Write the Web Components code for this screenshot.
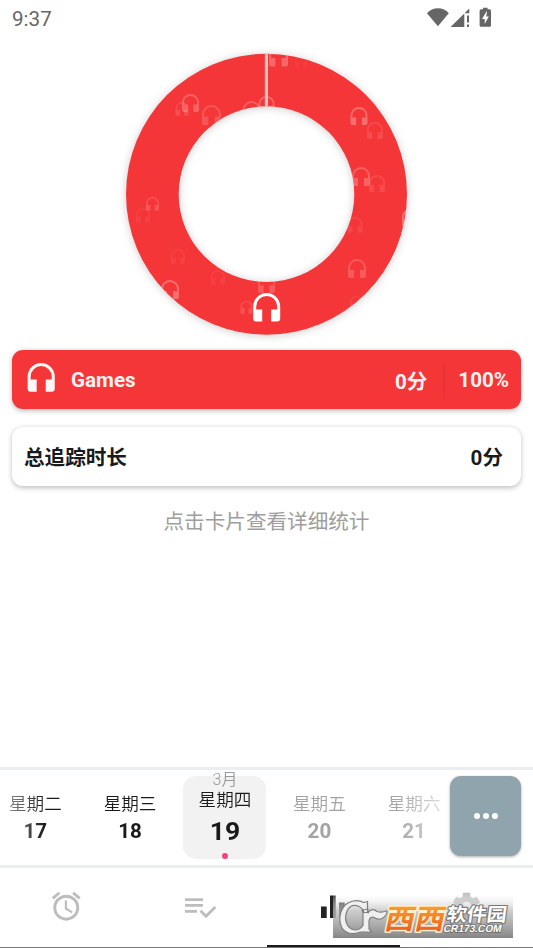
<!DOCTYPE html>
<html lang="zh-CN">
<head>
<meta charset="utf-8">
<title>统计</title>
<style>
html,body{margin:0;height:100%;overflow:hidden;background:#fff}
body{font-family:Roboto,"Noto Sans CJK SC",sans-serif}
</style>
</head>
<body>
<stats-screen></stats-screen>
<script>
const define=(name,html,setup)=>customElements.define(name,class extends HTMLElement{
  constructor(){
    super();
    this.attachShadow({mode:'open'});
    if(!setup)this.shadowRoot.innerHTML=html;
  }
  connectedCallback(){ if(setup)this.shadowRoot.innerHTML=setup(this); }
});
const HEADSET='M12 1a9 9 0 0 0-9 9v8a2 2 0 0 0 2 2h4v-8H5v-2a7 7 0 0 1 14 0v2h-4v8h4a2 2 0 0 0 2-2v-8a9 9 0 0 0-9-9z';

define('status-bar',`<style>
:host{display:flex;align-items:center;height:36px;padding:0 40px 0 12px;box-sizing:border-box;color:#666;font-size:20.600px}
span{flex:1;line-height:36px;padding-top:1px}
svg{display:block}
</style>
<span>9:37</span>
<svg width="66" height="24" viewBox="0 0 66 24" fill="#666">
<path d="M0 7.300C5.500 .7 16.500 .7 21.800 7.300L10.900 20.300z"/>
<path d="M23.500 21L37.300 7.400V21zM38 6.800L42.300 2.600v4.600h-4.300z"/>
<path d="M40 9.500h2v7h-2zM40 18.500h2V21h-2z"/>
<path d="M56 1.700h4.600v1.600h1.900a1.500 1.500 0 0 1 1.500 1.500v14.400a1.500 1.500 0 0 1-1.500 1.500h-8.400a1.500 1.500 0 0 1-1.500-1.500V4.800a1.500 1.500 0 0 1 1.500-1.500H56z"/>
<path d="M59.500 5.500L55 13h2.700v5l4.100-7.400h-2.500l.7-5z" fill="#fff"/>
</svg>`);

define('ring-chart','',()=>{
  const marks=[[182,102,13,.13],[190.500,94,17,.22],[211.500,105,19,.16],[251.500,101,18,.2],[266.500,96,16,.25],[278.500,46.500,19,.25],[359,107,17,.28],[375,122,16,.1],[361,167,18,.22],[377,175,16,.1],[152.500,197,13,.16],[143,208,14,.06],[178,249,14,.06],[170,280,18,.28],[218,270,14,.06],[246.500,301,12,.14],[266.500,275,17,.18],[357,259,18,.18],[355,217,15,.08],[356,296,12,.08],[411,208,18,.3],[301,55,12,.04]];
  return `<style>
:host{display:block;width:320px;height:310px;margin:0 auto}
svg{display:block;overflow:visible;filter:drop-shadow(0 1px 4px #0003)}
</style>
<svg width="320" height="310" viewBox="107 36 320 310">
<defs><clipPath id="ring"><path clip-rule="evenodd" d="M126 194.200a140.500 140.500 0 1 0 281 0a140.500 140.500 0 1 0-281 0zM178.700 194.200a87.800 87.800 0 1 1 175.600 0a87.800 87.800 0 1 1-175.600 0z"/></clipPath></defs>
<g clip-path="url(#ring)">
<rect x="120" y="50" width="300" height="300" fill="#f53638"/>
${marks.map(([x,y,w,o])=>`<path fill="#fff" opacity="${o}" transform="translate(${x},${y}) scale(${w/18}) translate(-12,-1)" d="${HEADSET}"/>`).join('')}
<path d="M265 50h3v60h-3z" fill="#dfc4c4"/><path d="M264.600 54h.8v52h-.8z" fill="#b88"/>
</g>
<path fill="#fff" transform="translate(266.700,293) scale(1.500) translate(-12,-1)" d="${HEADSET}"/>
</svg>`;});

define('stat-card','',el=>`<style>
:host{display:flex;align-items:center;height:59px;margin:0 12px;border-radius:11px;background:#fff;color:#1a1a1a;box-shadow:0 1.500px 5px #00000040;box-sizing:border-box;font-size:20.600px;font-weight:700;padding:0 18px 1px 12px}
:host([filled]){background:#f53638;color:#fff1f1;padding:1px 12px 0 14px}
::slotted([slot=name]){flex:1}
::slotted([slot=time]){position:relative;top:-.5px}
svg{margin:-5px 14px 0 0}
i{width:2px;height:35px;background:#e83337;margin:0 13px 0 16px}
</style>${el.hasAttribute('filled')?`<svg width="31" height="31" viewBox="1.900 .3 20.600 20.600" fill="#fff6f6"><path d="${HEADSET}"/></svg>`:''}
<slot name="name"></slot><slot name="time"></slot>${el.hasAttribute('filled')?'<i></i>':''}<slot name="share"></slot>`);

define('day-cell','',el=>`<style>
:host{display:flex;flex-direction:column;align-items:center;width:94.700px;flex:none;color:#1a1a1a;box-sizing:border-box;padding-top:23px}
:host([faded]){color:#a3a3a3}
.w{font-size:17.600px;line-height:22px;font-weight:350}
.d{font-size:20.600px;line-height:24px;font-weight:700;margin-top:4px}
:host([active]){padding:0 5.500px 0 6px}
.box{display:flex;flex-direction:column;align-items:center;width:83px;height:83px;margin-top:6px;background:#f2f2f2;border-radius:13px}
.m{font-size:16px;line-height:18px;margin-top:-5px;color:#999;font-weight:350}
.box .w{margin-top:0}.box .d{font-size:26.500px;line-height:30px;margin-top:5px}
.dot{width:6px;height:6px;border-radius:50%;background:#f4427c;margin-top:7px}
</style>${el.hasAttribute('active')?`<div class="box"><div class="m">${el.getAttribute('month')}</div><div class="w">${el.getAttribute('week')}</div><div class="d">${el.getAttribute('day')}</div><div class="dot"></div></div>`:`<div class="w">${el.getAttribute('week')}</div><div class="d">${el.getAttribute('day')}</div>`}`);

define('day-strip',`<style>
:host{display:flex;height:101px;box-sizing:border-box;border-top:3px solid #eaeef0;border-bottom:3px solid #eaeef0;padding-right:12px;justify-content:space-between}
.days{display:flex;width:441px;overflow:hidden;-webkit-mask-image:linear-gradient(90deg,#0006,#000 45px,#000 395px,#0006);mask-image:linear-gradient(90deg,#0006,#000 45px,#000 395px,#0006)}
.in{display:flex;margin-left:-12px}
button{all:unset;display:flex;align-items:center;justify-content:center;gap:3px;width:71px;height:80px;margin-top:6px;border-radius:11px;background:#90a4ad;box-shadow:0 1px 3px #0005}
b{width:6px;height:6px;border-radius:50%;background:#fff}
</style><div class="days"><div class="in">
<day-cell week="星期二" day="17"></day-cell><day-cell week="星期三" day="18"></day-cell><day-cell active month="3月" week="星期四" day="19"></day-cell><day-cell faded week="星期五" day="20"></day-cell><day-cell faded week="星期六" day="21"></day-cell></div></div>
<button><b></b><b></b><b></b></button>`);

const C_SHAPE='M31 9.500L34.500 8.500V19.500H31C28.500 12 19 9.500 14.500 17C10.500 25 13 36 22 37C26 37 28 35.500 30 32.500V20L29 17L35 16V20C37 16 41 15.500 44 18.500C48 20 51 19 54.500 17.500C53 25 47 28 42 25C38.500 23 36.500 24.500 36 28V36L39 39H27C20 42 12 41 8.500 34C4.500 25 8 14 15 10C20 7 26 7 31 9.500Z';
define('site-mark',`<style>
:host{display:block;position:absolute;left:333px;top:893px;width:180px;height:45px}
svg{display:block;overflow:visible}
</style>
<svg width="180" height="45" viewBox="0 0 180 45">
<defs><linearGradient id="bg" x2="0" y2="1"><stop stop-color="#fff" stop-opacity="0"/><stop offset=".12" stop-color="#eee" stop-opacity=".35"/><stop offset=".4" stop-color="#bbb" stop-opacity=".75"/><stop offset="1" stop-color="#858585"/></linearGradient>
<linearGradient id="or" x2="0" y2="1"><stop offset=".2" stop-color="#fba528"/><stop offset="1" stop-color="#ea4f20"/></linearGradient></defs>
<rect width="180" height="45" fill="url(#bg)"/>
<path d="${C_SHAPE}" fill="#efefef" stroke="#808080" stroke-width="1.200" stroke-linejoin="round"/>
<g font-family="Noto Sans CJK SC,sans-serif" font-weight="700" paint-order="stroke" stroke-linejoin="round">
<text transform="translate(50.500,35.500) skewX(-12)" font-size="28" textLength="60" lengthAdjust="spacingAndGlyphs" fill="url(#or)" stroke="#fff0d0" stroke-width="3">西西</text>
<text transform="translate(113,28) skewX(-8)" font-size="18.500" textLength="60" lengthAdjust="spacingAndGlyphs" fill="#fff" stroke="#777" stroke-width="2.200">软件园</text>
<text transform="translate(110,38.500) skewX(-12)" font-family="Liberation Sans,sans-serif" font-size="10.500" textLength="58" lengthAdjust="spacingAndGlyphs" fill="#fff" stroke="#707070" stroke-width="1.800">CR173.COM</text>
</g></svg>`);

define('nav-bar',`<style>
:host{display:grid;grid-template-columns:repeat(4,1fr);height:80px;box-sizing:border-box;border-bottom:1px solid #777;position:relative}
div{display:flex;align-items:center;justify-content:center;position:relative}
svg{display:block}
.up{margin-bottom:3px}
.on::after{content:"";position:absolute;left:0;right:0;bottom:0;height:2px;background:#1a1a1a}
</style>
<div><svg class="up" width="34.500" height="34.500" viewBox="0 0 24 24" fill="#bdbdbd"><path d="M22 5.720l-4.600-3.860-1.290 1.530 4.600 3.860L22 5.720zM7.880 3.390L6.600 1.860 2 5.710l1.290 1.530 4.590-3.850zM12.500 8H11v6l4.750 2.850.75-1.230-4-2.370V8zM12 4a9 9 0 1 0 0 18 9 9 0 0 0 0-18zm0 16a7 7 0 1 1 0-14 7 7 0 0 1 0 14z"/></svg></div>
<div><svg width="32" height="24" viewBox="0 0 32 24" fill="none" stroke="#bdbdbd" stroke-width="2.800"><path d="M1 3.600H19M1 9.400H19M1 15.300H13M16.500 14.700L22 20.200L31.300 10.900"/></svg></div>
<div class="on"><svg width="28" height="32" viewBox="0 0 28 32" fill="#222"><path d="M2 14.500h5.700V26H2zM11 3.500h5.700V26H11zM20 10.500h5.700V26H20z"/></svg></div>
<div><svg class="up" width="33" height="33" viewBox="0 0 24 24" fill="#bdbdbd"><path fill-rule="evenodd" d="M9.500 2h5l.5 3 1.700 1 2.800-1.100 2.400 4.100-2.300 1.900v2.200l2.300 1.900-2.400 4.100-2.800-1.100-1.700 1-.5 3h-5l-.5-3-1.700-1-2.800 1.100L2.100 15l2.300-1.900v-2.200L2.100 9l2.400-4.100L7.300 6 9 5zM12 8.500a3.500 3.500 0 1 0 0 7 3.500 3.500 0 0 0 0-7z"/></svg></div>`);

define('stats-screen',`<style>
:host{display:flex;flex-direction:column;width:533px;height:948px;overflow:hidden;position:relative;background:#fff}
.cards{display:flex;flex-direction:column;gap:18px;margin-top:4px}
p{margin:24px 0 0;text-align:center;font-size:20.600px;line-height:24px;color:#9e9e9e;font-weight:400}
.fill{flex:1}
</style>
<status-bar></status-bar><ring-chart></ring-chart>
<div class="cards"><stat-card filled><span slot="name">Games</span><span slot="time">0分</span><span slot="share">100%</span></stat-card>
<stat-card><span slot="name">总追踪时长</span><span slot="time">0分</span></stat-card></div>
<p>点击卡片查看详细统计</p><div class="fill"></div>
<day-strip></day-strip><nav-bar></nav-bar><site-mark></site-mark>`);
</script>
</body>
</html>
